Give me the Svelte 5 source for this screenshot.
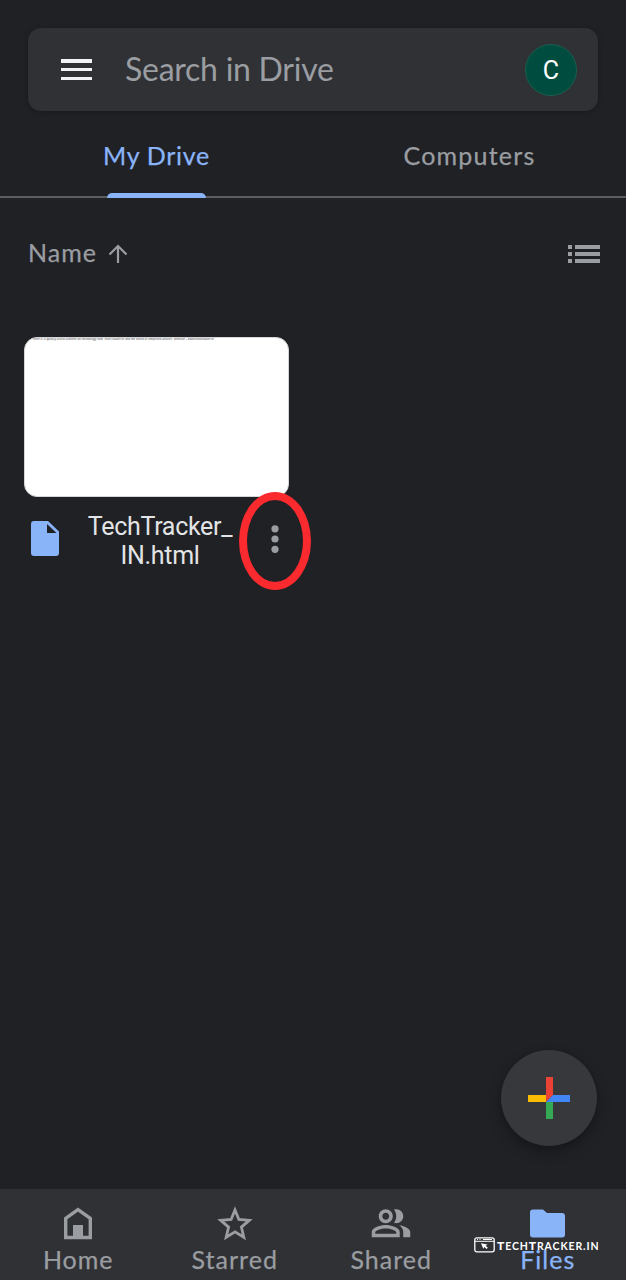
<script>
  const tabs = ['Home', 'Starred', 'Shared', 'Files'];
</script>

<div class="screen">
  <header class="search">
    <svg class="menu" width="32" height="22" viewBox="0 0 32 22"><path fill="#f1f3f4" d="M0 0h31v4H0zM0 9h31v3H0zM0 18h31v3H0z" /></svg>
    <span class="hint">Search in Drive</span>
    <span class="avatar">C</span>
  </header>

  <nav class="tabs">
    <div class="tab active"><span>My Drive</span><i></i></div>
    <div class="tab"><span class="computers">Computers</span></div>
  </nav>

  <div class="sort">
    <span class="name">Name</span>
    <svg class="arrow" width="20" height="20" viewBox="0 0 20 20"><path d="M10 19V2M1.500 10.500 10 2l8.500 8.500" fill="none" stroke="#9a9da1" stroke-width="2.200" /></svg>
    <svg class="list" width="32" height="18" viewBox="0 0 32 18"><path fill="#9a9da1" d="M0 0h4v4H0zM7 0h25v4H7zM0 7h4v4H0zM7 7h25v4H7zM0 14h4v4H0zM7 14h25v4H7z" /></svg>
  </div>

  <main>
    <article>
      <div class="thumb"><span>Here is a quickly useful content on technology with TechTracker.in and the world of simplified articles. Website - www.techtracker.in</span></div>
      <div class="file">
        <svg width="28" height="35" viewBox="0 0 28 35"><path fill="#8ab4f8" fill-rule="evenodd" d="M3 0h14l11 10.500V32a3 3 0 0 1-3 3H3a3 3 0 0 1-3-3V3a3 3 0 0 1 3-3zM16 3v9h9.500z" /></svg>
        <p>TechTracker_<br />IN.html</p>
        <svg class="dots" width="8" height="28" viewBox="0 0 8 28"><g fill="#9a9da1"><circle cx="4" cy="3.800" r="3.600" /><circle cx="4" cy="14" r="3.600" /><circle cx="4" cy="24.300" r="3.600" /></g></svg>
      </div>
      <div class="ring"></div>
    </article>
  </main>

  <button class="fab" aria-label="New">
    <svg width="42" height="42" viewBox="0 0 42 42"><path fill="#ea4335" d="M18 0h7v18l-7 7z" /><path fill="#fbbc04" d="M0 18h18v7H0z" /><path fill="#34a853" d="M18 25h7v17h-7z" /><path fill="#4285f4" d="M25 18h17v7H18z" /></svg>
  </button>

  <footer>
    {#each tabs as tab, i}
      <div class="item {tab.toLowerCase()}">
        <svg width="40" height="36" viewBox="0 0 40 36">
          {#if i === 0}
            <path d="M7.700 13.300 20 4.500l12.300 8.800v19.200H7.700z" fill="none" stroke="#9a9da1" stroke-width="3.400" /><path fill="#9a9da1" d="M15 20h10v13H15z" />
          {:else if i === 1}
            <path d="M20 5 23.900 14.500l10.400.8-7.900 6.800 2.400 10.100L20 26.800l-8.800 5.400 2.400-10.100-7.900-6.800L16.100 14.500z" fill="none" stroke="#9a9da1" stroke-width="2.800" />
          {:else if i === 2}
            <g transform="translate(-1 -2.800) scale(1.750)" fill="#9a9da1"><path d="M16.670 13.130C18.040 14.060 19 15.320 19 17v3h4v-3c0-2.180-3.570-3.470-6.330-3.870zM15 12c2.210 0 4-1.790 4-4s-1.790-4-4-4c-.47 0-.91.1-1.330.24C14.500 5.270 15 6.580 15 8s-.5 2.730-1.330 3.760c.42.14.86.24 1.330.24zM9 12c2.210 0 4-1.790 4-4s-1.790-4-4-4-4 1.790-4 4 1.790 4 4 4zm0-6c1.100 0 2 .9 2 2s-.9 2-2 2-2-.9-2-2 .9-2 2-2zm0 7c-2.670 0-8 1.340-8 4v3h16v-3c0-2.660-5.330-4-8-4zm6 5H3v-.99C3.200 16.290 6.300 15 9 15s5.800 1.290 6 2v1z" /></g>
          {:else}
            <path fill="#8ab4f8" d="M5 4.500h10l4 3.500h15a3 3 0 0 1 3 3v18.500a3 3 0 0 1-3 3H5a3 3 0 0 1-3-3v-22a3 3 0 0 1 3-3z" />
          {/if}
        </svg>
        <span>{tab}</span>
      </div>
    {/each}
  </footer>

  <div class="mark">
    <svg width="21" height="16" viewBox="0 0 21 16"><rect x=".8" y=".8" width="19.400" height="14" rx="2" fill="none" stroke="#fff" stroke-width="1.300" /><path d="M1 4.300h19M3 2.500h1M5.500 2.500h1M9 2.500h9" stroke="#fff" stroke-width="1" /><path d="m7 6.300 6.500 1.200-1.700 1.200 2 2-1.300 1.300-2-2-1.200 1.700z" fill="#fff" /></svg>
    <span><b>T</b>ECH<b>T</b>RACKER.IN</span>
  </div>
</div>

<style>
  :global(body) { margin: 0; background: #202125; }
  svg { display: block; flex: none; }
  .screen { position: relative; box-sizing: border-box; width: 626px; height: 1280px; padding-top: 28px; overflow: hidden; background: #202125; color: #9a9da1; font-family: Lato, sans-serif; display: flex; flex-direction: column; }
  .search { flex: none; box-sizing: border-box; height: 83px; margin: 0 28px; padding: 0 21px 0 33px; border-radius: 13px; background: #303135; box-shadow: 0 1px 4px #191a1e; display: flex; align-items: center; }
  .hint { margin: -2px 0 0 32px; font: 32px/40px Lato, sans-serif; letter-spacing: -.25px; }
  .avatar { box-sizing: border-box; width: 52px; height: 52px; margin-left: auto; border: 1.500px solid #185e4e; border-radius: 50%; background: #004d3f; color: #fff; font: 25px/51px Roboto, sans-serif; text-align: center; }
  .tabs { flex: none; box-sizing: border-box; height: 87px; display: flex; border-bottom: 2px solid #5c5d61; }
  .tab { flex: 1; display: flex; flex-direction: column; align-items: center; justify-content: space-between; padding-top: 28px; font: 25px/32px Lato, sans-serif; letter-spacing: .7px; }
  .tab span { -webkit-text-stroke-width: .25px; }
  .computers { letter-spacing: 1.200px; }
  .active, .active span { color: #8ab4f8; }
  .tab i { width: 99px; height: 5px; margin-bottom: -2px; border-radius: 5px 5px 0 0; background: #8ab4f8; }
  .sort { flex: none; height: 40px; margin: 36px 26px 0 28px; display: flex; align-items: center; font-size: 25px; letter-spacing: 1px; }
  .name { margin-top: -4px; -webkit-text-stroke-width: .25px; }
  .arrow { margin-left: 11px; }
  .list { margin-left: auto; }
  main { flex: 1; padding: 63px 24px 0; }
  article { position: relative; width: 265px; }
  .thumb { box-sizing: border-box; height: 160px; border: 1px solid #d5d6d8; border-radius: 13px; background: #fff; overflow: hidden; }
  .thumb span { display: block; margin: -1px 0 0 8px; color: #444; font: italic 3px/4px "Liberation Sans", sans-serif; letter-spacing: .055px; white-space: nowrap; }
  .file { display: flex; align-items: flex-start; padding: 15px 10px 0 7px; }
  .file > svg:first-child { margin-top: 9px; }
  p { margin: 0 0 0 26px; width: 150px; text-align: center; color: #e3e4e6; font: 25px/29px Roboto, sans-serif; letter-spacing: -.3px; }
  .file .dots { margin: 13px 0 0 auto; }
  .ring { position: absolute; left: 215px; top: 155px; box-sizing: border-box; width: 72px; height: 98px; border: 8px solid #fb2a2e; border-radius: 50%; }
  .fab { position: absolute; left: 501px; top: 1050px; width: 96px; height: 96px; padding: 0; border: 0; border-radius: 50%; background: #37383b; box-shadow: 0 6px 12px #17181b, 0 1px 3px #191a1d; display: grid; place-items: center; }
  footer { flex: none; height: 91px; display: grid; grid-template-columns: repeat(4, 1fr); background: #303135; }
  .item { display: flex; flex-direction: column; align-items: center; padding-top: 16px; font: 25px/32px Lato, sans-serif; letter-spacing: 1px; }
  .item span { margin-top: 2px; -webkit-text-stroke-width: .25px; }
  .files { color: #8ab4f8; }
  .mark { position: absolute; left: 474px; top: 1237px; display: flex; align-items: flex-start; color: #fff; font: 700 10.500px/16px Lato, sans-serif; letter-spacing: .9px; white-space: nowrap; }
  .mark span { margin: 1px 0 0 2px; }
  .mark b { font-size: 12px; }
</style>
